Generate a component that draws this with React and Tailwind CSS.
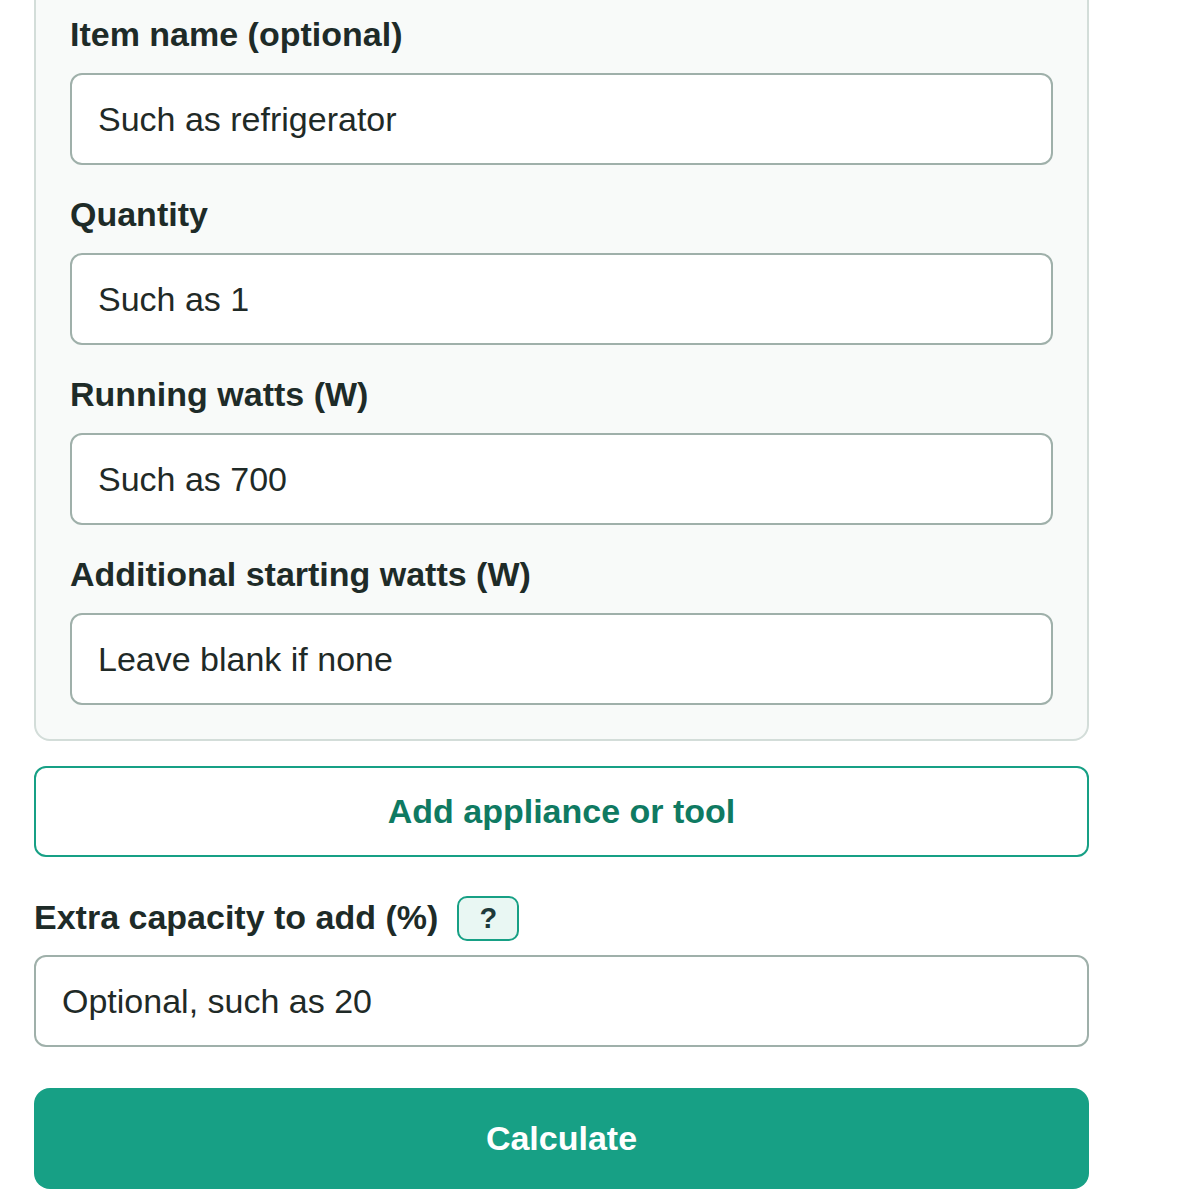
const fields = [
  { label: 'Item name (optional)', placeholder: 'Such as refrigerator' },
  { label: 'Quantity', placeholder: 'Such as 1' },
  { label: 'Running watts (W)', placeholder: 'Such as 700' },
  { label: 'Additional starting watts (W)', placeholder: 'Leave blank if none' },
]

function Field({ label, placeholder }) {
  return (
    <div className="mb-[30px] last:mb-0">
      <label className="mb-5 block text-[34px] font-bold leading-[38px] text-[#1e2b28]">
        {label}
      </label>
      <input
        type="text"
        placeholder={placeholder}
        className="block h-[92px] w-full rounded-xl border-2 border-[#9fb0aa] bg-white px-[26px] text-[34px] text-[#1f2a27] placeholder:text-[#1f2a27] outline-none"
      />
    </div>
  )
}

export default function App() {
  return (
    <div
      className="min-h-[1200px] bg-white px-[34px] pb-10"
      style={{ fontFamily: '"Liberation Sans", Arial, sans-serif' }}
    >
      <div className="w-[1055px]">
        <div className="-mt-10 rounded-2xl border-2 border-[#d3ddd9] bg-[#f8faf9] px-[34px] pt-[53px] pb-[34px]">
          {fields.map((field) => (
            <Field key={field.label} {...field} />
          ))}
        </div>

        <button
          type="button"
          className="mt-[25px] flex h-[91px] w-full items-center justify-center rounded-xl border-2 border-[#17a085] bg-white text-[34px] font-bold text-[#0f7a62]"
        >
          Add appliance or tool
        </button>

        <div className="mt-[39px] flex h-[45px] items-center gap-[19px]">
          <span className="pb-1 text-[34px] font-bold leading-[38px] text-[#1e2b28]">
            Extra capacity to add (%)
          </span>
          <button
            type="button"
            className="flex h-[45px] w-[62px] items-center justify-center rounded-[10px] border-2 border-[#17a085] bg-[#e9f7f3] text-[29px] font-bold text-[#1e3a3a]"
          >
            ?
          </button>
        </div>

        <input
          type="text"
          placeholder="Optional, such as 20"
          className="mt-[14px] block h-[92px] w-full rounded-xl border-2 border-[#9fb0aa] bg-white px-[26px] text-[34px] text-[#1f2a27] placeholder:text-[#1f2a27] outline-none"
        />

        <button
          type="button"
          className="mt-[41px] flex h-[101px] w-full items-center justify-center rounded-2xl bg-[#17a085] text-[34px] font-bold text-white"
        >
          Calculate
        </button>
      </div>
    </div>
  )
}
